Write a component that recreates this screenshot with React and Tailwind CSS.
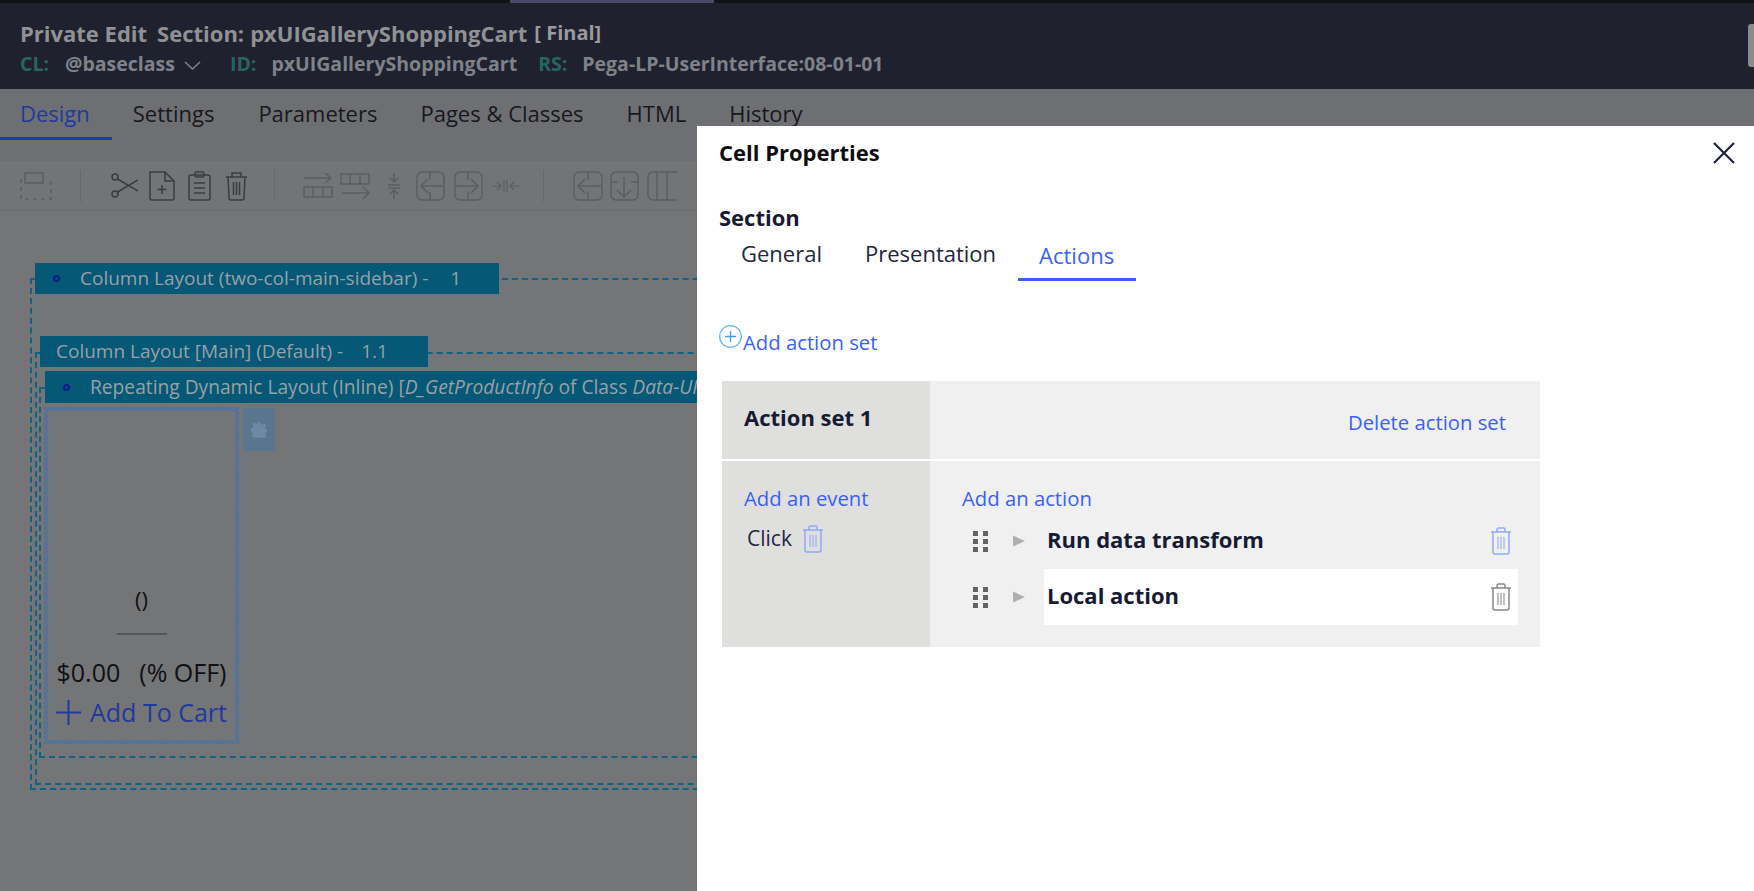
import React from "react";

const DIM = "#3b3c40";
const FAINT = "#5c5d61";

const Svg = ({ w, h, className = "", children, stroke = DIM, sw = 1.5 }) => (
  <svg
    width={w}
    height={h}
    viewBox={`0 0 ${w} ${h}`}
    fill="none"
    stroke={stroke}
    strokeWidth={sw}
    className={`shrink-0 ${className}`}
  >
    {children}
  </svg>
);

const TrashIcon = ({ color, w = 22, h = 28 }) => (
  <svg width={w} height={h} viewBox="0 0 22 28" fill="none" stroke={color} strokeWidth="1.500">
    <path d="M1 5h20M7 5V2.500C7 1.600 7.600 1 8.500 1h5c.9 0 1.500.6 1.500 1.500V5" />
    <path d="M3 5v20c0 1.200.8 2 2 2h12c1.200 0 2-.8 2-2V5" />
    <path d="M8 10v12M11 10v12M14 10v12" strokeWidth="1.500" opacity="0.7" />
  </svg>
);

const Grip = () => (
  <svg width="15" height="21" viewBox="0 0 15 21" fill="#636363">
    <rect x="0" y="0" width="5" height="5" />
    <rect x="10" y="0" width="5" height="5" />
    <rect x="0" y="8" width="5" height="5" />
    <rect x="10" y="8" width="5" height="5" />
    <rect x="0" y="16" width="5" height="5" />
    <rect x="10" y="16" width="5" height="5" />
  </svg>
);

const Caret = () => (
  <svg width="12" height="12" viewBox="0 0 12 12" fill="#b0b0b0">
    <path d="M0 0.5 12 6 0 11.5z" />
  </svg>
);

const Toolbar = () => (
  <div className="flex items-center h-[50px] mt-[21px] bg-[#737476] border-b border-[#68696b] pl-[20px]">
    {/* add group */}
    <Svg w={32} h={28} stroke={FAINT}>
      <rect x="5" y="1" width="18" height="10" />
      <path d="M1 7v20h30V7" strokeDasharray="4 4" />
    </Svg>
    <div className="w-px h-[32px] bg-[#67686a] ml-[28px] mr-[30px]" />
    {/* scissors */}
    <Svg w={27} h={25}>
      <circle cx="4" cy="4" r="3" />
      <circle cx="4" cy="21" r="3" />
      <path d="M6.500 6 27 18M6.500 19 27 7" />
    </Svg>
    {/* new file */}
    <Svg w={26} h={30} className="ml-[11px]">
      <path d="M1 1h15l9 9v17c0 1-1 2-2 2H3c-1 0-2-1-2-2z" />
      <path d="M16 1v9h9M13 14v9M8.500 18.500h9" />
    </Svg>
    {/* paste */}
    <Svg w={23} h={30} className="ml-[13px]">
      <rect x="1" y="4" width="21" height="25" rx="2" />
      <rect x="7" y="1" width="9" height="5" rx="1.500" />
      <path d="M6 12h11M6 17h11M6 22h11" />
    </Svg>
    {/* delete */}
    <Svg w={23} h={30} className="ml-[14px]">
      <path d="M1 6h21M7 6V2h9v4" />
      <path d="M3 6l1 21c0 1 1 2 2 2h11c1 0 2-1 2-2l1-21" />
      <path d="M8.500 11v13M11.500 11v13M14.500 11v13" />
    </Svg>
    <div className="w-px h-[32px] bg-[#67686a] ml-[26px] mr-[28px]" />
    {/* insert row below */}
    <Svg w={30} h={25} stroke={FAINT}>
      <path d="M1 5h27M22 0l6 5-6 5" />
      <rect x="1" y="14" width="28" height="10" />
      <path d="M10 14v10M20 14v10" />
    </Svg>
    {/* insert row above */}
    <Svg w={31} h={26} stroke={FAINT} className="ml-[7px]">
      <rect x="1" y="1" width="28" height="10" />
      <path d="M10 1v10M20 1v10M2 20h27M23 14l6 6-6 6" />
    </Svg>
    {/* move */}
    <Svg w={12} h={26} stroke={FAINT} className="ml-[17px]">
      <path d="M6 0v8M2 5l4 4 4-4M0 12h12M0 15h12M6 26v-8M2 21l4-4 4 4" />
    </Svg>
    {/* col left */}
    <Svg w={29} h={30} stroke={FAINT} className="ml-[16px]">
      <rect x="1" y="1" width="27" height="28" rx="5" />
      <path d="M14 1v8M14 21v8M27 15H5M12 8l-7 7 7 7" />
    </Svg>
    {/* col right */}
    <Svg w={29} h={30} stroke={FAINT} className="ml-[9px]">
      <rect x="1" y="1" width="27" height="28" rx="5" />
      <path d="M14 1v8M14 21v8M2 15h22M17 8l7 7-7 7" />
    </Svg>
    {/* merge */}
    <Svg w={27} h={14} stroke={FAINT} sw={1.2} className="ml-[9px]">
      <path d="M0 7h8M5 3l4 4-4 4M12 1v12M15 1v12M27 7h-8M22 3l-4 4 4 4" />
    </Svg>
    <div className="w-px h-[32px] bg-[#67686a] ml-[24px] mr-[29px]" />
    <Svg w={30} h={30} stroke={FAINT}>
      <rect x="1" y="1" width="28" height="28" rx="5" />
      <path d="M15 1v8M15 21v8M28 15H5M12 8l-7 7 7 7" />
    </Svg>
    <Svg w={29} h={30} stroke={FAINT} className="ml-[7px]">
      <rect x="1" y="1" width="27" height="28" rx="5" />
      <path d="M1 11h7M21 11h7M14 6v20M7 19l7 7 7-7" />
    </Svg>
    <Svg w={30} h={30} stroke={FAINT} className="ml-[8px]">
      <path d="M30 1H7C3 1 1 3 1 7v16c0 4 2 6 6 6h23M10 1v28M20 1v28" />
    </Svg>
  </div>
);

const Canvas = () => (
  <div className="flex-1 bg-[#747577] pl-[30px] pt-[67px]">
    <div className="w-[1000px] h-[512px] border-2 border-dashed border-[#0e6482]">
      <div className="-mt-[17px] ml-[3px] w-[464px] h-[31px] bg-[#055876] flex items-center text-[19px] text-[#98a1a6]">
        <span className="ml-[18px] mr-[20px] w-[7px] h-[7px] rounded-full border-2 border-[#101a90]" />
        <span>Column Layout (two-col-main-sidebar) -</span>
        <span className="ml-[22px]">1</span>
      </div>
      <div className="mt-[58px] ml-[3px] w-[980px] h-[433px] border-2 border-dashed border-[#0e6482]">
        <div className="-mt-[18px] ml-[3px] w-[388px] h-[31px] bg-[#055876] flex items-center text-[19px] text-[#98a1a6] pl-[16px]">
          <span>Column Layout [Main] (Default) -</span>
          <span className="ml-[18px]">1.1</span>
        </div>
        <div className="mt-[20px] ml-[2px] w-[960px] h-[371px] border-2 border-dashed border-[#0e6482]">
          <div className="-mt-[18px] ml-[4px] w-[800px] h-[32px] bg-[#055876] flex items-center text-[19.200px] text-[#98a1a6] whitespace-nowrap">
            <span className="ml-[18px] mr-[20px] w-[7px] h-[7px] rounded-full border-2 border-[#101a90]" />
            <span>
              Repeating Dynamic Layout (Inline) [<i>D_GetProductInfo</i> of Class <i>Data-UI</i>
            </span>
          </div>
          <div className="flex mt-[5px] ml-[4px]">
            <div className="w-[193px] h-[335px] border-[3px] border-[#56749a] outline-1 outline-dashed outline-[#4f6f96] flex flex-col items-center justify-end pb-[10px] text-[#101012]">
              <span className="text-[22px] leading-[30px] mb-[19px]">()</span>
              <span className="w-[50px] border-t-2 border-[#55565a] mb-[20px]" />
              <div className="flex gap-[19px] text-[25px] leading-[34px] whitespace-nowrap">
                <span>$0.00</span>
                <span>(% OFF)</span>
              </div>
              <div className="flex items-center gap-[9px] mt-[5px] text-[#1f3a9e] text-[25px] leading-[36px] whitespace-nowrap">
                <svg width="25" height="25" viewBox="0 0 25 25" stroke="#1f3a9e" strokeWidth="2">
                  <path d="M12.500 0v25M0 12.500h25" />
                </svg>
                Add To Cart
              </div>
            </div>
            <div className="ml-[5px] w-[32px] h-[43px] bg-[#5a7590] flex items-center justify-center">
              <svg width="16" height="16" viewBox="0 0 16 16" fill="#6e89a6">
                <path d="M6.500 0h3l.4 2.200 1.500.6L13.300 1.500l2.100 2.100-1.300 1.900.6 1.500 2.200.4v3l-2.200.4-.6 1.500 1.300 1.900-2.100 2.100-1.900-1.300-1.500.6-.4 2.200h-3l-.4-2.200-1.500-.6-1.900 1.300-2.100-2.100 1.300-1.900-.6-1.500L0 9.500v-3l2.200-.4.6-1.500L1.500 2.700 3.600.6l1.900 1.300 1.500-.6z" />
              </svg>
            </div>
          </div>
        </div>
      </div>
    </div>
  </div>
);

const ActionRow = ({ label, highlighted, trashColor }) => (
  <div className="flex items-center h-[56px]">
    <div className="ml-[43px] w-[40px] flex">
      <Grip />
    </div>
    <div className="w-[31px] flex">
      <Caret />
    </div>
    <div
      className={`flex-1 h-full flex items-center pl-[3px] pr-[6px] justify-between ${
        highlighted ? "bg-white" : ""
      }`}
    >
      <span className="text-[22px] font-bold text-[#171a33] -mt-[4px]">{label}</span>
      <TrashIcon color={trashColor} />
    </div>
  </div>
);

const CellProperties = () => (
  <div className="absolute left-[697px] top-[126px] right-0 bottom-0 bg-white font-['Open_Sans',sans-serif]">
    <div className="flex items-center justify-between h-[54px] pl-[22px] pr-[19px]">
      <span className="text-[22px] leading-[30px] -mt-[2px] font-bold text-[#0d0d12]">Cell Properties</span>
      <svg width="22" height="22" viewBox="0 0 22 22" stroke="#1d2140" strokeWidth="2.200">
        <path d="M1 1l20 20M21 1 1 21" />
      </svg>
    </div>
    <div className="mt-[22px] pl-[22px] h-[31px] leading-[30px] text-[22px] font-bold text-[#171a33]">Section</div>
    <div className="flex pl-[22px] h-[48px] text-[22px] leading-[32px] text-[#23263d]">
      <div className="pl-[22px] pr-[21px] pt-[4px]">General</div>
      <div className="px-[22px] pt-[4px]">Presentation</div>
      <div className="pl-[21px] pr-[22px] pt-[6px] text-[#3a5ffb] border-b-[3px] border-[#3a5ffb]">Actions</div>
    </div>
    <div className="mt-[44px] pl-[22px] flex items-start h-[56px]">
      <svg width="23" height="23" viewBox="0 0 23 23" fill="none" stroke="#62bbe4" strokeWidth="1.300" className="shrink-0">
        <circle cx="11.500" cy="11.500" r="10.800" />
        <path d="M11.500 6v11M6 11.500h11" stroke="#3f9fd6" />
      </svg>
      <span className="text-[20.3px] leading-[30px] ml-px mt-[2px] text-[#3a5ffb]">Add action set</span>
    </div>
    <div className="ml-[25px] w-[818px]">
      <div className="flex h-[78px]">
        <div className="w-[208px] bg-[#dfdfde] pl-[22px] pb-[6px] flex items-center text-[22px] font-bold text-[#171a33]">
          Action set 1
        </div>
        <div className="flex-1 bg-[#f0f0f0] flex items-center justify-end pr-[34px] pt-[5px] text-[20.3px] text-[#3a5ffb]">
          Delete action set
        </div>
      </div>
      <div className="flex h-[186px] mt-[2px]">
        <div className="w-[208px] bg-[#dfdfde] pl-[22px] pt-[23px]">
          <div className="text-[20.3px] leading-[28px] text-[#3a5ffb]">Add an event</div>
          <div className="flex items-center ml-[3px] mt-[11px] text-[21px] text-[#23263d]">
            Click
            <span className="ml-[10px] flex">
              <TrashIcon color="#8fabf6" />
            </span>
          </div>
        </div>
        <div className="flex-1 bg-[#f0f0f0] pt-[23px] pr-[22px]">
          <div className="ml-[32px] text-[20.3px] leading-[28px] text-[#3a5ffb]">Add an action</div>
          <div className="mt-px">
            <ActionRow label="Run data transform" trashColor="#8fabf6" />
            <ActionRow label="Local action" trashColor="#85868c" highlighted />
          </div>
        </div>
      </div>
    </div>
  </div>
);

export default function App() {
  return (
    <div className="relative w-[1754px] h-[891px] overflow-hidden flex flex-col bg-[#747577] font-['Open_Sans',sans-serif]">
      <div className="h-[3px] bg-[#111214] shrink-0 pl-[510px]">
        <div className="w-[204px] h-full bg-[#4c4a66]" />
      </div>
      <header className="relative h-[86px] shrink-0 bg-[#1f222e] pl-[20px] pt-[15px]">
        <div className="flex text-[22px] leading-[30px] font-bold text-[#909194] whitespace-nowrap">
          <span>Private Edit</span>
          <span className="ml-[10px]">Section:</span>
          <span className="ml-[6px]">pxUIGalleryShoppingCart</span>
          <span className="ml-[7px] text-[20px] text-[#9a9b9e]">[ Final]</span>
        </div>
        <div className="flex items-center text-[19.500px] leading-[28px] mt-[2px] font-bold text-[#7f8289] whitespace-nowrap">
          <span className="text-[#276660]">CL:</span>
          <span className="ml-[16px]">@baseclass</span>
          <svg width="17" height="9" viewBox="0 0 17 9" fill="none" stroke="#7f8289" strokeWidth="1.500" className="ml-[9px] mt-[3px]">
            <path d="M1 1l7.500 7L16 1" />
          </svg>
          <span className="ml-[29px] text-[#276660]">ID:</span>
          <span className="ml-[15px]">pxUIGalleryShoppingCart</span>
          <span className="ml-[21px] text-[#276660]">RS:</span>
          <span className="ml-[15px]">Pega-LP-UserInterface:08-01-01</span>
        </div>
        <div className="absolute right-0 top-[21px] w-[6px] h-[43px] rounded-l-[3px] bg-[#8a8b8d]" />
      </header>
      <nav className="flex h-[51px] shrink-0 bg-[#6e6f73] text-[22px] leading-[32px] text-[#18181c]">
        <div className="pl-[20px] pr-[22px] pt-[8px] border-b-[3px] border-[#1d3ca8] text-[#1f3a9e]">Design</div>
        <div className="ml-[21px] pt-[8px]">Settings</div>
        <div className="ml-[44px] pt-[8px]">Parameters</div>
        <div className="ml-[43px] pt-[8px]">Pages &amp; Classes</div>
        <div className="ml-[43px] pt-[8px]">HTML</div>
        <div className="ml-[43px] pt-[8px]">History</div>
      </nav>
      <div className="flex-1 flex flex-col bg-[#6e6f73] min-h-0">
        <Toolbar />
        <Canvas />
      </div>
      <CellProperties />
    </div>
  );
}
